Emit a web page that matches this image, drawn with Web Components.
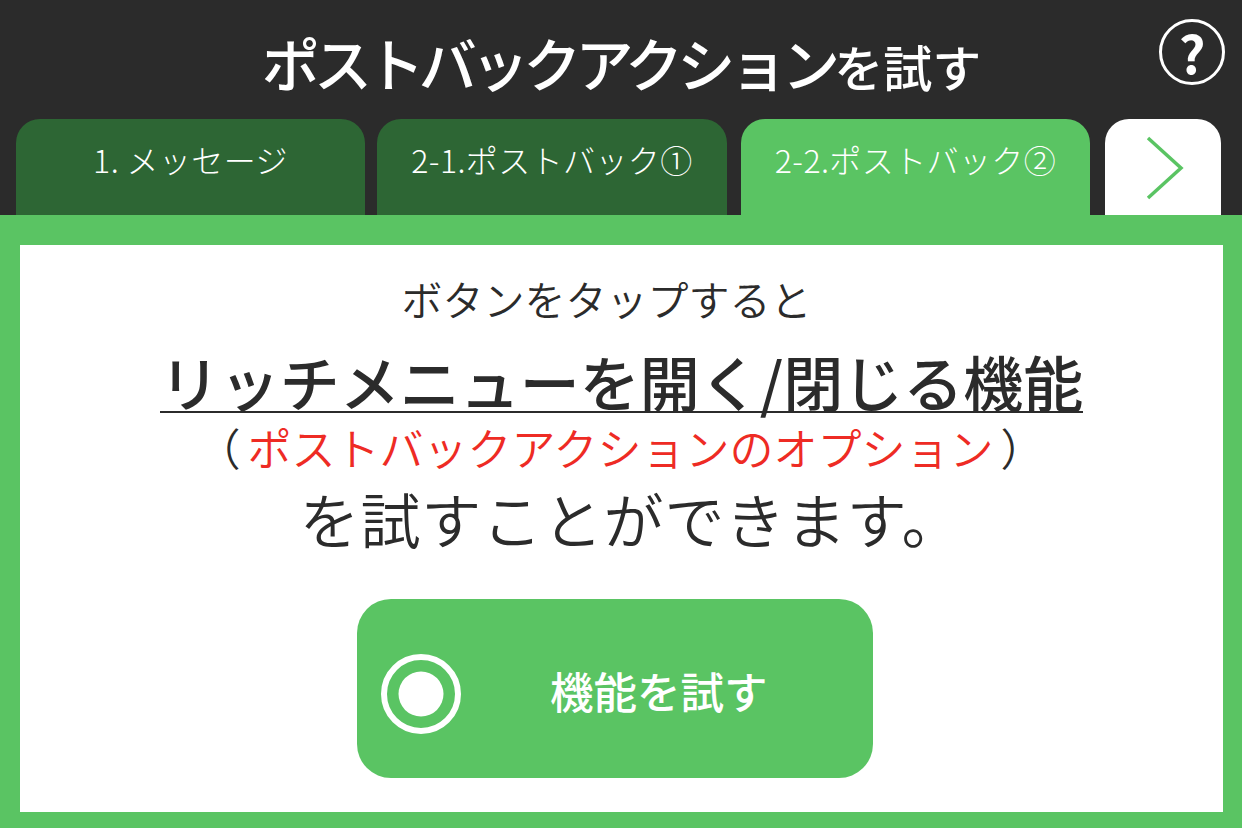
<!DOCTYPE html>
<html lang="ja">
<head>
<meta charset="utf-8">
<style>
  html, body { margin: 0; padding: 0; background: #2b2b2b; }
  body { width: 1242px; height: 828px; overflow: hidden; font-family: "Noto Sans CJK JP", "Noto Sans", sans-serif; }
</style>
</head>
<body>
<demo-screen>
  <demo-header slot="header">ポストバックアクション<small>を試す</small></demo-header>
  <demo-tab slot="tabs" style="--tab-w:349px;--tab-gap:12px">1. メッセージ</demo-tab>
  <demo-tab slot="tabs" style="--tab-w:350px;--tab-gap:14px">2-1.ポストバック①</demo-tab>
  <demo-tab slot="tabs" style="--tab-w:349px;--tab-gap:15px" active>2-2.ポストバック②</demo-tab>
  <demo-next slot="tabs"></demo-next>
  <demo-panel>
    <demo-button slot="action">機能を試す</demo-button>
  </demo-panel>
</demo-screen>

<script>
const GREEN = '#5ac463';

class DemoScreen extends HTMLElement {
  constructor() {
    super();
    this.attachShadow({ mode: 'open' });
    this.shadowRoot.innerHTML = `
      <style>
        :host { display: flex; flex-direction: column; width: 1242px; height: 828px; background: #2b2b2b; }
        .tabs { display: flex; height: 96px; padding-left: 16px; }
      </style>
      <slot name="header"></slot>
      <div class="tabs"><slot name="tabs"></slot></div>
      <slot></slot>
    `;
  }
}

class DemoHeader extends HTMLElement {
  constructor() {
    super();
    this.attachShadow({ mode: 'open' });
    this.shadowRoot.innerHTML = `
      <style>
        :host {
          display: flex; align-items: center; justify-content: center;
          position: relative; height: 119px; box-sizing: border-box; padding-top: 5px;
          color: #fff; font-size: 58px; font-weight: 500; line-height: 1;
        }
        .title { letter-spacing: -5.7px; margin-left: 1px; }
        ::slotted(small) { font-size: 49px; font-weight: 500; letter-spacing: 0; }
        .help {
          position: absolute; left: 1159px; top: 19px; width: 66px; height: 66px; box-sizing: border-box;
          border: 3px solid #fff; border-radius: 50%;
          display: flex; align-items: center; justify-content: center;
          font-size: 52px; font-weight: 700; line-height: 60px;
        }
      </style>
      <div class="title"><slot></slot></div>
      <div class="help">?</div>
    `;
  }
}

class DemoTab extends HTMLElement {
  constructor() {
    super();
    this.attachShadow({ mode: 'open' });
    this.shadowRoot.innerHTML = `
      <style>
        :host {
          display: block; flex: 0 0 var(--tab-w, 349px); height: 96px; margin-right: var(--tab-gap, 13px); box-sizing: border-box;
          padding-top: 19px; border-radius: 24px 24px 0 0;
          background: #2d6634; color: #fff;
          font-size: 32px; font-weight: 300; line-height: 42px; letter-spacing: 0.4px; text-align: center; white-space: nowrap;
        }
        :host([active]) { background: ${GREEN}; }
      </style>
      <slot></slot>
    `;
  }
}

class DemoNext extends HTMLElement {
  constructor() {
    super();
    this.attachShadow({ mode: 'open' });
    this.shadowRoot.innerHTML = `
      <style>
        :host {
          display: flex; align-items: center; justify-content: center; box-sizing: border-box;
          flex: 0 0 116px; height: 96px; padding: 2px 0 0 4px;
          border-radius: 24px 24px 0 0; background: #fff;
        }
      </style>
      <svg width="40" height="64" viewBox="0 0 40 64">
        <path d="M3 2 L36 32 L3 62" fill="none" stroke="${GREEN}" stroke-width="3.5"/>
      </svg>
    `;
  }
}

class DemoPanel extends HTMLElement {
  constructor() {
    super();
    this.attachShadow({ mode: 'open' });
    this.shadowRoot.innerHTML = `
      <style>
        :host { display: block; flex: 1; box-sizing: border-box; padding: 30px 19px 16px 20px; background: ${GREEN}; }
        .card {
          display: flex; flex-direction: column; align-items: center; height: 100%;
          background: #fff; color: #2b2b2b; white-space: nowrap;
        }
        .lead { margin: 27px 30px 0 0; font-size: 41px; line-height: 52px; font-weight: 350; }
        .main {
          margin-top: 23px; font-size: 60px; line-height: 68px; font-weight: 500;
          border-bottom: 2px solid #2b2b2b; height: 66px; box-sizing: border-box;
        }
        .note { margin: 6px 2px 0 0; font-size: 44px; line-height: 56px; font-weight: 350; text-spacing-trim: space-all; }
        .note span { color: #ee2b24; padding: 0 7px; }
        .can { margin: 7px 0 0 19px; font-size: 60px; line-height: 72px; font-weight: 350; letter-spacing: 0.8px; }
        .action { margin: 45px 13px 0 0; }
      </style>
      <div class="card">
        <div class="lead">ボタンをタップすると</div>
        <div class="main">リッチメニューを開く/閉じる機能</div>
        <div class="note">（<span>ポストバックアクションのオプション</span>）</div>
        <div class="can">を試すことができます。</div>
        <div class="action"><slot name="action"></slot></div>
      </div>
    `;
  }
}

class DemoButton extends HTMLElement {
  constructor() {
    super();
    this.attachShadow({ mode: 'open' });
    this.shadowRoot.innerHTML = `
      <style>
        :host {
          display: flex; align-items: center; box-sizing: border-box;
          width: 516px; height: 179px; padding-left: 24px;
          border-radius: 34px; background: ${GREEN}; color: #fff;
          font-size: 43.5px; font-weight: 500; white-space: nowrap;
        }
        svg { flex: none; margin-top: 10px; }
        .label { margin: 4px 0 0 89px; }
      </style>
      <svg width="80" height="80" viewBox="0 0 80 80">
        <circle cx="40" cy="40" r="37" fill="none" stroke="#fff" stroke-width="6"/>
        <circle cx="40" cy="40" r="22.5" fill="#fff"/>
      </svg>
      <div class="label"><slot></slot></div>
    `;
  }
}

customElements.define('demo-screen', DemoScreen);
customElements.define('demo-header', DemoHeader);
customElements.define('demo-tab', DemoTab);
customElements.define('demo-next', DemoNext);
customElements.define('demo-panel', DemoPanel);
customElements.define('demo-button', DemoButton);
</script>
</body>
</html>
